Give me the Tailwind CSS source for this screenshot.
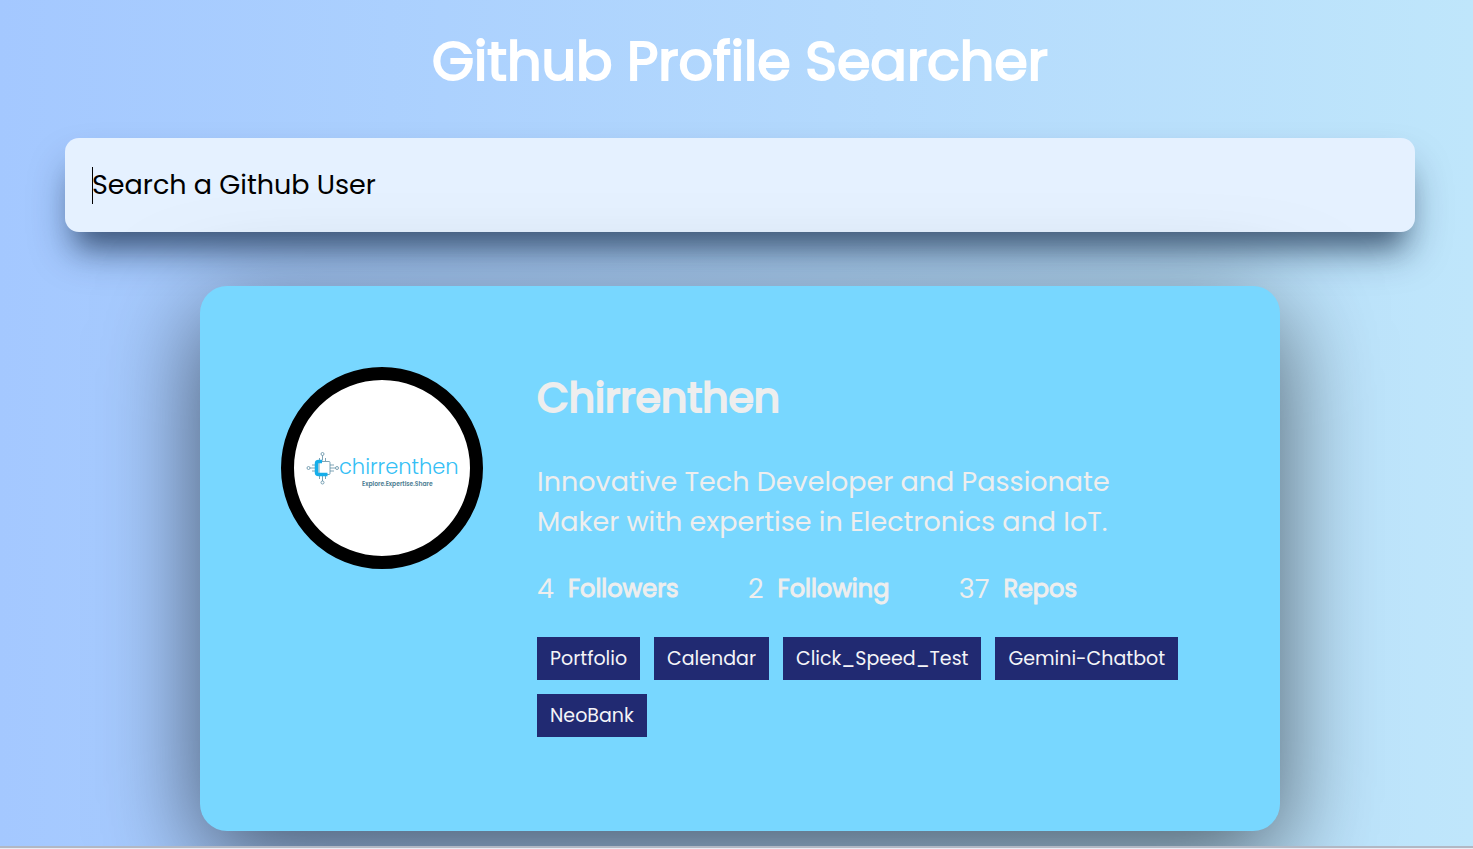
<!DOCTYPE html>
<html lang="en">
<head>
<meta charset="utf-8">
<meta name="viewport" content="width=device-width, initial-scale=1">
<title>Github Profile Searcher</title>
<script src="https://cdn.jsdelivr.net/npm/@tailwindcss/browser@4"></script>
</head>
<body class="flex min-h-screen flex-col overflow-hidden bg-gradient-to-r from-[#a4c8ff] to-[#bfe6fb] font-[Poppins,Inter,sans-serif]">
  <main class="flex grow flex-col items-center pr-[58px] pl-[65px] pb-[14px]">
    <h1 class="mt-[21px] text-center text-[54px] leading-[81px] font-normal text-white [-webkit-text-stroke:2px_white]">Github Profile Searcher</h1>

    <form class="relative mt-9 w-full">
      <input type="text" aria-label="Search a Github User" placeholder="Search a Github User" class="block h-[94px] w-full rounded-[14px] bg-[#e5f1ff] px-[27px] text-[27px] text-black shadow-[0_24px_40px_-5px_rgb(10_30_60/0.4),0_27px_27px_-14px_rgb(10_30_60/0.45)] outline-none placeholder:text-black">
      <span class="absolute top-[29px] left-[27px] h-[37px] w-px bg-black"></span>
    </form>

    <section class="relative mt-[54px] flex w-full max-w-[1080px] items-start gap-[54px] rounded-[27px] bg-[#78d7ff] p-[81px] text-[#eee] shadow-[0_27px_100px_rgb(0_0_0/0.6)]">
      <div class="size-[202px] shrink-0 overflow-hidden rounded-full border-[13px] border-black bg-white">
        <svg viewBox="0 0 176 176" class="size-full" role="img" aria-label="chirrenthen logo">
          <g fill="none" stroke="#5d8da3" stroke-width=".8">
            <path d="M28.500 75.500v5M25.500 78v3M31.500 78v3M28.500 96v5M25.500 96v3M31.500 96v3M16 88h5M18 85h3M18 91h3M36 88h5.500M36 85h4M36 91h4"/>
            <circle cx="28.500" cy="74" r="1.500"/><circle cx="28.500" cy="102.500" r="1.500"/><circle cx="14.500" cy="88" r="1.500"/><circle cx="43" cy="88" r="1.500"/>
            <rect x="25" y="81.500" width="11" height="13" rx="1" fill="#fff"/>
          </g>
          <path d="M28 81.500h-3.500q-2 0-2 2v9q0 2 2 2h9" fill="none" stroke="#16aeea" stroke-width="3.500"/>
          <text x="45" y="94" font-family="Poppins, Lato, sans-serif" font-weight="300" font-size="21" fill="#35c0f5">chirrenthen</text>
          <text x="68" y="106" font-family="Poppins, Inter, sans-serif" font-weight="600" font-size="6" fill="#4c7d92">Explore.Expertise.Share</text>
        </svg>
      </div>

      <div class="min-w-0 grow">
        <h2 class="text-[41px] leading-[62px] font-normal [-webkit-text-stroke:2px_#eee]">Chirrenthen</h2>
        <p class="mt-[33px] text-[27px] leading-10">Innovative Tech Developer and Passionate Maker with expertise in Electronics and IoT.</p>
        <ul class="mt-[27px] flex max-w-[540px] justify-between text-[27px] leading-10">
          <li class="flex items-center gap-[14px]">4 <strong class="text-[24px] font-normal [-webkit-text-stroke:1px_#eee]">Followers</strong></li>
          <li class="flex items-center gap-[14px]">2 <strong class="text-[24px] font-normal [-webkit-text-stroke:1px_#eee]">Following</strong></li>
          <li class="flex items-center gap-[14px]">37 <strong class="text-[24px] font-normal [-webkit-text-stroke:1px_#eee]">Repos</strong></li>
        </ul>
        <nav aria-label="Repositories" class="mt-7 mb-[13px] flex flex-wrap gap-[14px] text-[19px] leading-[43px] font-normal text-[#f4f4f8]">
          <a href="#" class="bg-[#212a72] px-[13px]">Portfolio</a>
          <a href="#" class="bg-[#212a72] px-[13px]">Calendar</a>
          <a href="#" class="bg-[#212a72] px-[13px]">Click_Speed_Test</a>
          <a href="#" class="bg-[#212a72] px-[13px]">Gemini-Chatbot</a>
          <a href="#" class="bg-[#212a72] px-[13px]">NeoBank</a>
        </nav>
      </div>
    </section>
  </main>
  <div class="relative h-[3px] shrink-0 border-t-2 border-[#b2b8c4] bg-[#e9edf6]"></div>
</body>
</html>
